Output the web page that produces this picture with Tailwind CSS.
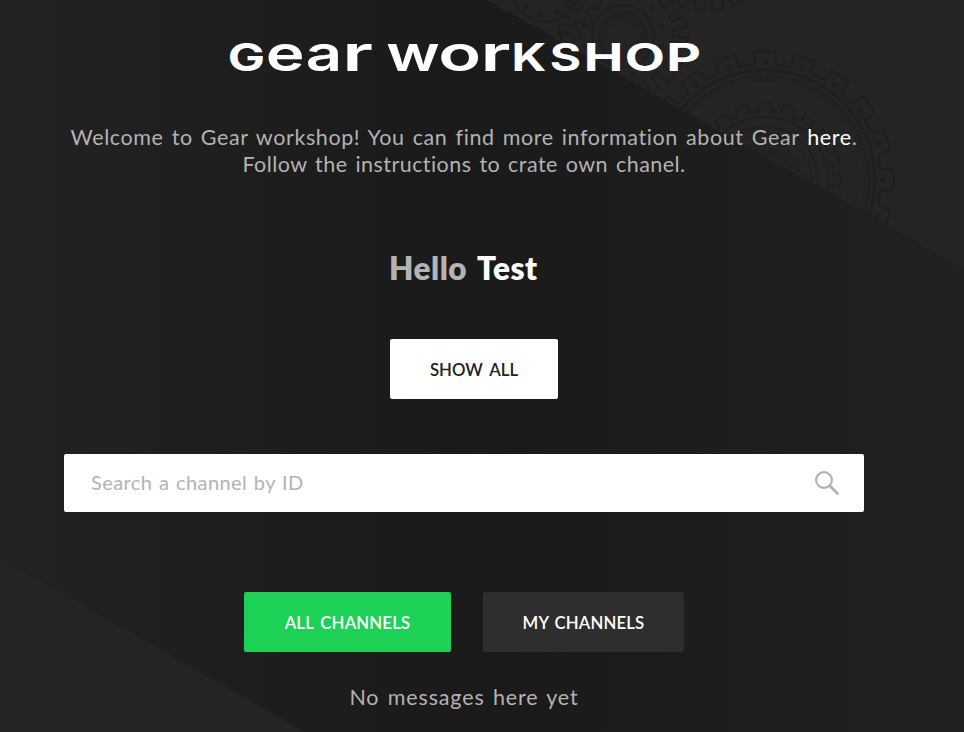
<!DOCTYPE html>
<html lang="en">
<head>
<meta charset="utf-8">
<title>Gear workshop</title>
<script src="https://cdn.jsdelivr.net/npm/@tailwindcss/browser@4"></script>
</head>
<body class="h-[732px] w-[964px] overflow-hidden bg-[#1b1b1b] font-['Lato','Noto_Sans',sans-serif]">
<div class="relative h-full w-full bg-linear-to-r from-[#222222] via-[#1a1a1a] via-50% to-[#212121]">
  <svg class="absolute inset-0" width="964" height="732" fill="none" stroke="#1f1f1f" aria-hidden="true">
    <defs><clipPath id="corner"><path d="M487 0H964V269Z"/></clipPath></defs>
    <path d="M487 0H964V269Z" fill="#242424" stroke="none"/>
    <path d="M0 558L305 732H0Z" fill="#242424" stroke="none"/>
    <g id="gears" clip-path="url(#corner)"></g>
  </svg>
  <main class="relative ml-16 flex w-[800px] flex-col items-center pt-[18px]">
    <h1 class="h-[80px] w-[500px]">
      <svg class="overflow-visible font-['Inter',sans-serif]" width="500" height="80" fill="#fff" id="title"></svg>
    </h1>
    <p class="mt-[26px] whitespace-nowrap text-center text-[21.5px] leading-[27px] text-[#b3b3b3]"><span class="tracking-[0.6px] [word-spacing:2px]">Welcome to Gear workshop! You can find more information about Gear <a class="text-white">here</a>.</span><br><span class="tracking-[0.45px] [word-spacing:2px]">Follow the instructions to crate own chanel.</span></p>
    <div class="mt-[70px] w-[148px]">
      <h2 class="-ml-px whitespace-nowrap text-[31.5px] font-extrabold leading-10 tracking-[0.5px] text-white [word-spacing:3px]"><span class="text-[#b3b3b3]">Hello</span> Test</h2>
      <button class="mt-[51px] block h-[60px] w-[168px] whitespace-nowrap rounded-[2px] bg-white pt-0.5 text-[16.8px] font-semibold text-[#222] [word-spacing:3px]"><span>SHOW ALL</span></button>
    </div>
    <div class="mt-[55px] flex h-[58px] w-full items-center justify-between rounded-[2px] bg-white pl-[27px] pr-6 text-[20px] text-[#b3b3b3]">
      <span class="pb-0.5 tracking-[0.4px] [word-spacing:1.2px]">Search a channel by ID</span>
      <svg width="26" height="26" fill="none" stroke="#b3b3b3" stroke-width="2.2"><circle cx="10" cy="10" r="7.9"/><path d="M15.8 15.8L23.5 23.5" stroke-width="2.8" stroke-linecap="round"/></svg>
    </div>
    <div class="mt-20 flex gap-8 whitespace-nowrap text-[16.8px] font-semibold tracking-[0.15px] text-white">
      <button class="h-[60px] w-[207px] rounded-[2px] bg-[#1cd155] pt-0.5 [word-spacing:2.5px]"><span>ALL CHANNELS</span></button>
      <button class="h-[60px] w-[201px] rounded-[2px] bg-[#2e2e2e] pt-0.5 [word-spacing:1.5px]"><span>MY CHANNELS</span></button>
    </div>
    <p class="mt-8 text-[21.5px] leading-[27px] tracking-[0.85px] text-[#b3b3b3] [word-spacing:2px]"><span>No messages here yet</span></p>
  </main>
</div>
<script>
const NS = 'http://www.w3.org/2000/svg';
function add(parent, tag, attrs) {
  const el = document.createElementNS(NS, tag);
  for (const k in attrs) el.setAttribute(k, attrs[k]);
  parent.appendChild(el);
  return el;
}
// Wide unicase wordmark: [letter, left ink edge, right ink edge]
const letters = [['G',229,263],['e',268.5,303],['a',307,339],['r',347,372],['w',387.5,439],['o',441,478],['r',485,509.5],['K',514,546],['S',551,580],['H',586.5,620],['O',626,663],['P',669,700]];
const title = document.getElementById('title');
const ctx = document.createElement('canvas').getContext('2d');
for (const [ch, l, r] of letters) {
  const lower = ch !== ch.toUpperCase();
  const size = lower ? 49.5 : 38, weight = lower ? 600 : 700;
  ctx.font = `${weight} ${size}px Inter`;
  const m = ctx.measureText(ch);
  const s = (r - l) / (m.actualBoundingBoxRight + m.actualBoundingBoxLeft);
  const t = add(title, 'text', {'font-size': size, 'font-weight': weight,
    transform: `translate(${l - 214 + m.actualBoundingBoxLeft * s} 53) scale(${s} 1)`});
  t.textContent = ch;
}
const g = document.getElementById('gears');
function ring(cx, cy, r, w, dash) {
  add(g, 'circle', {cx, cy, r, 'stroke-width': w, 'stroke-dasharray': dash || 'none'});
}
function teeth(cx, cy, r1, r2, n, rot, w) {
  let d = '';
  for (let i = 0; i < n; i++) {
    const a = (i / n) * 2 * Math.PI + rot, p = Math.PI / n;
    for (const [r, o] of [[r1, -.6], [r2, -.5], [r2, .5], [r1, .6]]) {
      d += (d ? 'L' : 'M') + (cx + r * Math.cos(a + o * p)).toFixed(1) + ' ' + (cy + r * Math.sin(a + o * p)).toFixed(1);
    }
  }
  add(g, 'path', {d: d + 'Z', 'stroke-width': w});
}
function dots(cx, cy, r, n, rot, s) {
  for (let i = 0; i < n; i++) {
    const a = (i / n) * 2 * Math.PI + rot;
    add(g, 'circle', {cx: cx + r * Math.cos(a), cy: cy + r * Math.sin(a), r: s, fill: '#1f1f1f', stroke: 'none'});
  }
}
const up = -Math.PI / 2;
teeth(765, 180, 116, 129, 20, up, 2.2);
dots(765, 180, 118, 20, up, 3);
ring(765, 180, 110, 3); ring(765, 180, 104, 3, '3 2'); ring(765, 180, 100, 1);
teeth(765, 180, 69, 77, 20, up, 2); ring(765, 180, 63, 1.5); ring(765, 180, 53, 1.5); ring(765, 180, 46, 1);
ring(765, 180, 32, 14, '1 2.5');
teeth(623, 36, 50, 65, 20, .1, 1.8);
dots(623, 36, 40, 12, -.25, 2.5);
ring(623, 36, 31, 2); ring(623, 36, 24, 1.5); ring(623, 36, 19, 8, '1 2');
teeth(708, -50, 52, 61, 20, 1.4, 2);
teeth(545, -12, 48, 58, 18, .3, 2); ring(545, -12, 42, 2, '3 2'); ring(545, -12, 34, 2); dots(545, -12, 27, 10, .5, 3);
</script>
</body>
</html>
